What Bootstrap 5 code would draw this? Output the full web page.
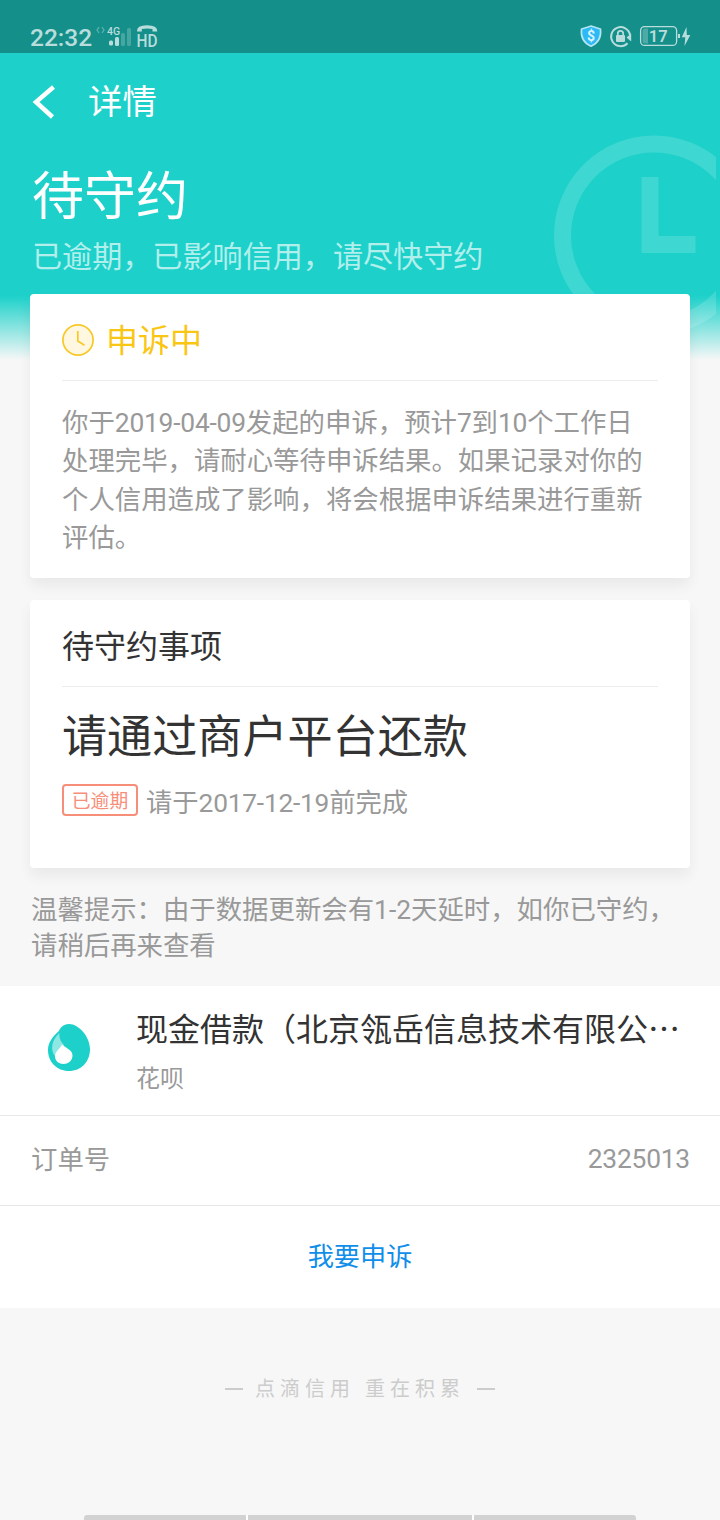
<!DOCTYPE html>
<html lang="zh-CN">
<head>
<meta charset="utf-8">
<meta name="viewport" content="width=device-width, initial-scale=1">
<title>详情</title>
<link href="https://cdn.jsdelivr.net/npm/bootstrap@5.3.0/dist/css/bootstrap.min.css" rel="stylesheet">
<style>
  body { background: #f7f7f7; color: #333; font-family: Roboto, "Noto Sans CJK SC", sans-serif; height: 1520px; overflow: hidden; }
  svg { display: block; flex: none; }
  .hero { height: 362px; background: linear-gradient(#1dd1ca 0, #1dd1ca 296px, #f7f7f7 360px); overflow: hidden; }
  .status-bar { height: 53px; background: #148f8a; color: #b9dddc; }
  .clock-text { font-size: 24.5px; font-weight: 500; line-height: 28px; }
  .topbar { height: 97px; }
  .topbar-title { font-size: 34.4px; line-height: 50px; }
  .hero-title { font-size: 52px; line-height: 76px; }
  .hero-sub { font-size: 30.1px; line-height: 44px; margin-top: -1px; color: rgba(255,255,255,.66); }
  .watermark { right: 4px; top: 134px; }
  .sheet { margin-top: -68px; padding: 0 30px; }
  .panel { border: 0; border-radius: 4px; box-shadow: 0 8px 14px rgba(0,0,0,.06); padding: 0 32px; }
  .panel-head { height: 87px; border-bottom: 1px solid #ededed; font-size: 32px; line-height: 48px; padding-top: 5px; }
  .amber { color: #fac616; }
  .muted { color: #999; font-size: 26.4px; }
  .num { letter-spacing: -.22px; }
  .appeal { height: 284px; }
  .appeal-text { line-height: 38.4px; padding-top: 23px; white-space: nowrap; }
  .todo { height: 268px; margin-top: 22px; }
  .todo-title { font-size: 45.1px; line-height: 66px; margin-top: 18px; }
  .overdue { width: 76px; height: 32px; border: 2px solid #f78e7a; border-radius: 4px; color: #f78e7a; font-size: 18.8px; line-height: 32px; margin-right: 8px; text-align: center; }
  .due { font-size: 26.3px; line-height: 38px; }
  .tip { padding: 24px 31px 0; height: 118px; line-height: 36px; }
  .merchant { height: 130px; border-bottom: 1px solid #e8e8e8; padding: 0 40px 0 48px; }
  .merchant-name { font-size: 32px; line-height: 46px; white-space: nowrap; margin-top: 18px; }
  .merchant-sub { font-size: 24px; line-height: 36px; color: #999; margin-top: 8px; }
  .order { height: 90px; border-bottom: 1px solid #e8e8e8; padding: 0 30px 0 31px; }
  .appeal-link { height: 102px; font-size: 26.2px; color: #108ee9; padding-top: 1px; }
  .slogan { padding-top: 66px; font-size: 20px; line-height: 30px; letter-spacing: 5px; color: #ccc; gap: 12px; }
  .rule-dash { width: 18px; height: 2px; background: #ccc; }
  .nav-hint { bottom: 0; left: 84px; width: 552px; height: 5px; gap: 2px; border-radius: 3px 3px 0 0; overflow: hidden; background: #fff; }
  .nav-hint span { background: #d2d2d2; }
</style>
</head>
<body>
<header class="hero position-relative text-white">
  <svg class="watermark position-absolute" width="162" height="204" viewBox="0 0 162 204" fill="none" stroke="#fff" stroke-opacity=".15">
    <circle cx="100" cy="101.500" r="91.500" stroke-width="17"/>
    <path d="M96 43V110.500H141.500" stroke-width="17"/>
  </svg>
  <div class="status-bar d-flex position-relative">
    <div class="clock-text" style="margin:24px 0 0 30px">22:32</div>
    <svg width="68" height="30" viewBox="95 23 68 30" style="margin:23px 0 0 3px" fill="#b9dddc">
      <path d="M99 27l-2 3 2 3M102 27l2 3-2 3" fill="none" stroke="#5fb1ad" stroke-width="1.300"/>
      <text x="107" y="35" font-size="10.500" font-weight="500" font-family="Roboto">4G</text>
      <rect x="109" y="40.500" width="4" height="5" rx="1.500"/><rect x="115" y="37" width="4" height="9" rx="1.500"/>
      <rect x="121" y="33" width="4" height="13" rx="1.500" opacity=".3"/><rect x="127" y="28" width="4" height="18" rx="1.500" opacity=".3"/>
      <path d="M137 31.500Q136.500 25.300 147 25.300T157.300 31.500H152.500V29Q147 27.900 141.800 29V31.500Z"/>
      <text x="136.500" y="46.600" font-size="17.500" font-weight="500" font-family="Roboto" textLength="21" lengthAdjust="spacingAndGlyphs">HD</text>
    </svg>
    <svg class="ms-auto" width="114" height="26" viewBox="578 23 114 26" style="margin:23px 28px 0 0" fill="#b9dddc">
      <path d="M591 26L600.500 29C601.500 37 598 43 591 46.200C584 43 580.500 37 581.500 29Z" fill="#2cb9f5" stroke="#b5e7f3" stroke-width="1.600"/>
      <text x="591" y="41.300" font-size="14" font-weight="700" text-anchor="middle" font-family="Roboto" fill="#d8f5fb">$</text>
      <path d="M627.500 43.200A9.500 9.500 0 1 1 630 35" fill="none" stroke="#b9dddc" stroke-width="2"/>
      <path d="M631.200 33.500V41.500L626.500 37.500Z"/>
      <rect x="616" y="35" width="9" height="7" rx="1"/><path d="M617.800 35.500V33.500a2.700 2.700 0 0 1 5.400 0V35.500" fill="none" stroke="#b9dddc" stroke-width="1.700"/>
      <rect x="640.600" y="26.600" width="36" height="18.800" rx="4" fill="none" stroke="#b9dddc" stroke-width="1.300"/>
      <path d="M645 28.500h3V43.500h-3q-2.500 0-2.500-2.500V31q0-2.500 2.500-2.500Z" opacity=".35"/>
      <text x="658.300" y="42" font-size="16.500" font-weight="600" text-anchor="middle" font-family="Roboto">17</text>
      <rect x="678" y="34" width="2" height="4"/>
      <path d="M686.500 27L681.800 37.300H685.300L684.500 46L690.300 35H686.800Z"/>
    </svg>
  </div>
  <nav class="topbar d-flex align-items-center position-relative">
    <svg width="24" height="34" viewBox="0 0 24 34" style="margin-left:32px" fill="none" stroke="#fff" stroke-width="4.500"><path d="M21.500 2L4 17L20.500 32"/></svg>
    <div class="topbar-title" style="margin-left:32px">详情</div>
  </nav>
  <div class="position-relative" style="padding:10px 0 0 32px">
    <div class="hero-title">待守约</div>
    <div class="hero-sub">已逾期，已影响信用，请尽快守约</div>
  </div>
</header>
<main>
  <div class="sheet position-relative">
    <section class="card panel appeal">
      <div class="panel-head d-flex align-items-center amber">
        <svg width="32" height="32" viewBox="0 0 32 32" fill="none" stroke="#f8c828" stroke-width="1.700"><circle cx="16" cy="16" r="15.100" fill="#fff7e0"/><path d="M15.800 7V17L22.500 21.200"/></svg>
        <span style="margin:2px 0 0 12px">申诉中</span>
      </div>
      <div class="appeal-text muted">你于<span class="num">2019-04-09</span>发起的申诉，预计<span class="num">7</span>到<span class="num">10</span>个工作日<br>处理完毕，请耐心等待申诉结果。如果记录对你的<br>个人信用造成了影响，将会根据申诉结果进行重新<br>评估。</div>
    </section>
    <section class="card panel todo">
      <div class="panel-head d-flex align-items-center"><span style="padding-top:3px">待守约事项</span></div>
      <div class="todo-title">请通过商户平台还款</div>
      <div class="d-flex" style="margin-top:13px">
        <span class="overdue">已逾期</span><span class="muted due">请于<span class="num">2017-12-19</span>前完成</span>
      </div>
    </section>
  </div>
  <div class="tip muted">温馨提示：由于数据更新会有1-2天延时，如你已守约，<br>请稍后再来查看</div>
  <section class="bg-white">
    <div class="merchant d-flex">
      <svg width="42" height="49" viewBox="0 0 42 49" style="margin-top:37px">
        <path d="M21 1C15 1 12 5 11 8C4 14 0 20 0 27C0 39 9 48 21 48S42 39 42 26C42 14 31 1 21 1Z" fill="#1dd1ca"/>
        <path d="M11.500 10C3.500 17 2 27 7 33C10 35 13 28 16 22C12 18 11 14 11.500 10Z" fill="#8ee7e3"/>
        <path d="M14 21.500C13 25 7 28 7 33.500C7 38 11 41 15.500 41S24.500 37.500 24.500 32.500C24.500 27 19 26 14 21.500Z" fill="#fff"/>
      </svg>
      <div style="margin-left:46px">
        <div class="merchant-name">现金借款（北京瓴岳信息技术有限公<span style="font-family:'Noto Sans CJK SC'">⋯</span></div>
        <div class="merchant-sub">花呗</div>
      </div>
    </div>
    <div class="order d-flex align-items-center justify-content-between">
      <span class="muted">订单号</span><span class="muted num" style="margin-top:-2px">2325013</span>
    </div>
    <div class="appeal-link d-flex align-items-center justify-content-center">我要申诉</div>
  </section>
  <footer class="slogan d-flex align-items-center justify-content-center">
    <span class="rule-dash"></span><span>点滴信用 重在积累</span><span class="rule-dash"></span>
  </footer>
</main>
<div class="nav-hint position-absolute d-flex"><span style="width:162px"></span><span style="width:224px"></span><span style="width:162px"></span></div>
<script src="https://cdn.jsdelivr.net/npm/bootstrap@5.3.0/dist/js/bootstrap.bundle.min.js"></script>
</body>
</html>
